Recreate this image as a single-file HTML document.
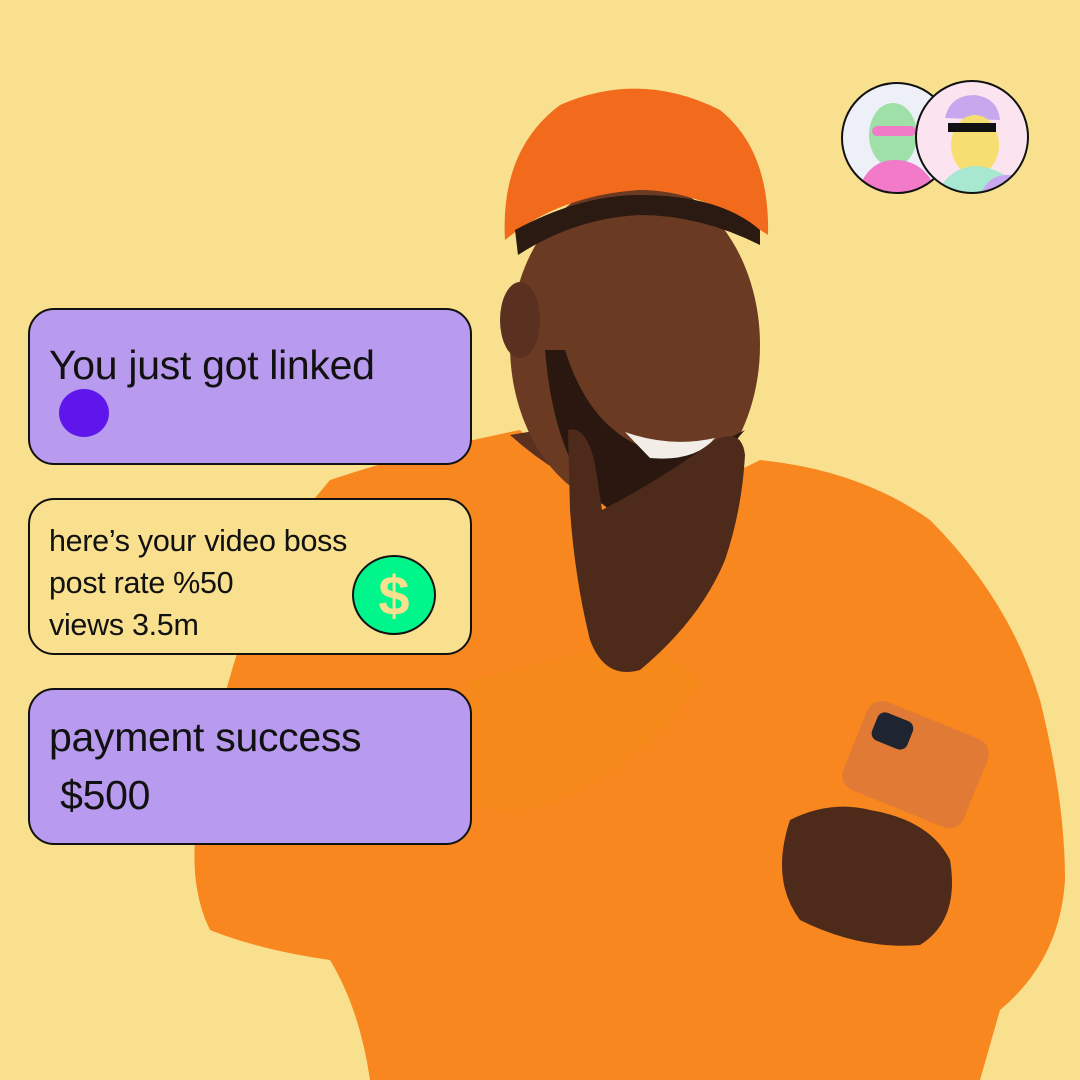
<!DOCTYPE html>
<html><head><meta charset="utf-8"><style>
body{margin:0;width:1080px;height:1080px;overflow:hidden;background:#f8e08e;font-family:"Liberation Sans",sans-serif;position:relative}
svg{position:absolute;left:0;top:0}
.b{position:absolute;left:28px;width:444px;height:157px;border:2px solid #111;border-radius:26px;box-sizing:border-box}
.p{background:#b89bee}.y{background:#f8e08e}
.t{position:absolute;left:19px;color:#111;white-space:nowrap;letter-spacing:-0.3px}
</style></head><body>
<svg width="1080" height="1080" viewBox="0 0 1080 1080">
<defs>
<clipPath id="c1"><circle cx="897" cy="138" r="55"/></clipPath>
<clipPath id="c2"><circle cx="972" cy="137" r="56"/></clipPath>
</defs>
<!-- sweater -->
<path d="M330 480 Q420 450 520 430 L560 470 L640 520 L760 460 Q860 470 930 520 Q1010 600 1040 700 Q1065 800 1065 880 Q1060 960 1000 1010 L980 1080 L370 1080 Q360 1010 330 960 Q260 950 210 930 Q185 880 200 800 Q230 650 280 540 Z" fill="#f7871e"/>
<path d="M470 680 Q560 660 640 640 L700 680 Q650 760 560 800 Q500 820 470 800 Z" fill="#f58a1a"/>
<!-- neck -->
<path d="M510 435 Q560 480 620 500 L720 470 L740 440 L600 420 Z" fill="#5a3020"/>
<!-- head -->
<ellipse cx="635" cy="345" rx="125" ry="165" fill="#6b3a22"/>
<ellipse cx="520" cy="320" rx="20" ry="38" fill="#5a3020"/>
<path d="M545 350 Q555 470 610 510 Q650 520 700 480 L745 430 Q700 455 650 450 Q590 430 565 350 Z" fill="#2a1810"/>
<path d="M625 432 Q670 448 715 438 Q695 462 650 458 Z" fill="#f2ede6"/>
<!-- beanie -->
<path d="M505 240 Q500 150 560 105 Q640 70 720 110 Q770 150 768 235 Q700 190 640 190 Q560 195 505 240 Z" fill="#f26a1c"/>
<path d="M515 230 Q580 195 640 195 Q720 195 760 230 L760 245 Q700 215 640 215 Q575 218 518 255 Z" fill="#2a1a12"/>
<!-- hand near chin -->
<path d="M568 430 Q588 425 596 470 L602 510 Q660 480 715 440 Q742 428 745 455 Q742 510 725 560 Q700 620 640 670 Q605 680 590 640 Q575 580 570 510 Z" fill="#4e2a1a"/>
<!-- phone -->
<g transform="rotate(22 910 765)"><rect x="850" y="715" width="130" height="95" rx="16" fill="#e07a35"/><rect x="862" y="725" width="38" height="30" rx="8" fill="#1e2430"/></g>
<!-- right hand -->
<path d="M790 820 Q830 800 870 810 Q930 820 950 860 Q960 920 920 945 Q860 950 800 920 Q770 880 790 820 Z" fill="#4e2a1a"/>
<!-- avatars -->
<circle cx="897" cy="138" r="55" fill="#eef0f8"/>
<g clip-path="url(#c1)">
<ellipse cx="893" cy="135" rx="24" ry="32" fill="#9ee0a8"/>
<path d="M855 200 Q865 160 895 160 Q928 160 940 200 Z" fill="#f37ac8"/>
<rect x="872" y="126" width="44" height="10" rx="5" fill="#f07cc8"/>
</g>
<circle cx="897" cy="138" r="55" fill="none" stroke="#111" stroke-width="2"/>
<circle cx="972" cy="137" r="56" fill="#fbe4f0"/>
<g clip-path="url(#c2)">
<path d="M945 118 Q950 95 975 95 Q998 98 1000 120 Z" fill="#c7a7ee"/>
<ellipse cx="975" cy="145" rx="24" ry="30" fill="#f6df70"/>
<path d="M935 200 Q945 168 975 166 Q1010 168 1025 200 Z" fill="#a8e8d0"/>
<path d="M978 200 Q990 166 1022 178 L1030 200 Z" fill="#c7a7ee"/>
<rect x="948" y="123" width="48" height="9" fill="#111"/>
</g>
<circle cx="972" cy="137" r="56" fill="none" stroke="#111" stroke-width="2"/>
</svg>
<div class="b p" style="top:308px"><div class="t" style="top:32px;font-size:41px">You just got linked</div><div style="position:absolute;left:29px;top:79px;width:50px;height:48px;border-radius:50%;background:#5f16ea"></div></div>
<div class="b y" style="top:498px"><div class="t" style="top:20px;font-size:30.5px;line-height:42px">here’s your video boss<br>post rate %50<br>views 3.5m</div>
<div style="position:absolute;left:322px;top:55px;width:84px;height:80px;border-radius:50%;background:#00f58a;border:2px solid #111;box-sizing:border-box;text-align:center;line-height:78px;font-size:56px;font-weight:bold;color:#f8e08e">$</div></div>
<div class="b p" style="top:688px"><div class="t" style="top:18px;font-size:41px;line-height:58px">payment success<br>&nbsp;$500</div></div>
</body></html>
